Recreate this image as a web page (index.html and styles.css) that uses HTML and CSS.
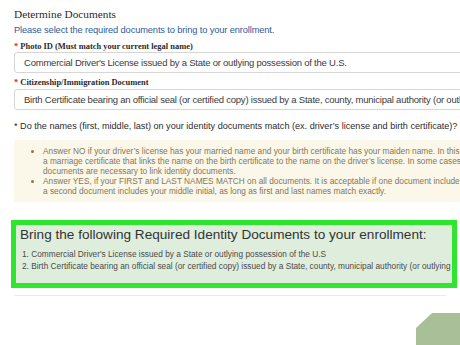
FILE: index.html
```html
<!DOCTYPE html>
<html lang="en">
<head>
    <meta charset="UTF-8">
    <title>Determine Documents</title>
    <link rel="stylesheet" href="styles.css">
</head>
<body>
    <div class="page">
        <h2 class="title">Determine Documents</h2>
        <p class="hint">Please select the required documents to bring to your enrollment.</p>

        <div class="field">
            <label class="field-label"><span class="req">*</span> Photo ID (Must match your current legal name)</label>
            <div class="select">Commercial Driver's License issued by a State or outlying possession of the U.S.</div>
        </div>

        <div class="field field-second">
            <label class="field-label"><span class="req">*</span> Citizenship/Immigration Document</label>
            <div class="select">Birth Certificate bearing an official seal (or certified copy) issued by a State, county, municipal authority (or outlying possession of the U.S.)</div>
        </div>

        <p class="question">* Do the names (first, middle, last) on your identity documents match (ex. driver’s license and birth certificate)? If not, why?</p>

        <div class="note">
            <ul>
                <li>Answer NO if your driver’s license has your married name and your birth certificate has your maiden name. In this case you must bring<br>a marriage certificate that links the name on the birth certificate to the name on the driver’s license. In some cases, multiple<br>documents are necessary to link identity documents.</li>
                <li>Answer YES, if your FIRST and LAST NAMES MATCH on all documents. It is acceptable if one document includes a full middle name and<br>a second document includes your middle initial, as long as first and last names match exactly.</li>
            </ul>
        </div>

        <div class="summary">
            <h3>Bring the following Required Identity Documents to your enrollment:</h3>
            <ol>
                <li>Commercial Driver's License issued by a State or outlying possession of the U.S</li>
                <li>Birth Certificate bearing an official seal (or certified copy) issued by a State, county, municipal authority (or outlying possession of the U.S.)</li>
            </ol>
        </div>
        <div class="rule"></div>
    </div>

    <svg class="corner" width="44" height="32" viewBox="0 0 44 32">
        <polygon points="16,0 44,0 44,32 0,32 0,15" fill="#a9bf97"/>
    </svg>
</body>
</html>
```

FILE: styles.css
```css
html, body {
    margin: 0;
    padding: 0;
    background: #fff;
    width: 460px;
    height: 345px;
    overflow: hidden;
}

body {
    position: relative;
    font-family: "Liberation Sans", Arial, sans-serif;
    color: #333;
}

.page {
    padding: 7px 0 0 14px;
    width: 600px;
    white-space: nowrap;
}

.title {
    font-family: "Liberation Serif", "Times New Roman", serif;
    font-weight: normal;
    font-size: 11.3px;
    line-height: 14px;
    margin: 0;
    color: #2b2b2b;
}

.hint {
    margin: 3px 0 0;
    font-size: 9.3px;
    letter-spacing: -0.13px;
    line-height: 12px;
    color: #2d5d9c;
}

.field {
    margin-top: 5px;
}

.field-second {
    margin-top: 4px;
}

.field-label {
    display: block;
    font-family: "Liberation Serif", "Times New Roman", serif;
    font-size: 8.45px;
    line-height: 11px;
    font-weight: bold;
    color: #2b2b2b;
}

.req {
    color: #d9281e;
}

.select {
    margin-top: 0;
    height: 19px;
    width: 500px;
    border: 1px solid #d6d6d6;
    border-radius: 3px;
    padding: 0 9px;
    font-size: 9.5px;
    letter-spacing: -0.22px;
    line-height: 19px;
    color: #3a3a3a;
    overflow: hidden;
}

.field-second .select {
    margin-top: 1px;
}

.question {
    margin: 10px 0 0;
    font-size: 9.1px;
    line-height: 13px;
    color: #2b2b2b;
}

.note {
    margin-top: 7px;
    width: 560px;
    background: #fbf8e9;
    padding: 6px 0;
    color: #85765a;
    font-size: 8.3px;
    line-height: 10px;
}

.note ul {
    margin: 0;
    padding-left: 29px;
}

.summary {
    box-sizing: border-box;
    margin: 18px 0 0 -3px;
    width: 446px;
    border: 5px solid #2fe62f;
    background: #dfeedc;
    padding: 1px 0 11px 4px;
    overflow: hidden;
}

.summary h3 {
    margin: 0;
    font-weight: normal;
    font-size: 13.6px;
    line-height: 17px;
    color: #333;
}

.summary ol {
    margin: 5px 0 0 2px;
    padding-left: 0;
    list-style-position: inside;
    font-size: 8.3px;
    line-height: 12px;
    color: #4a4a4a;
}

.rule {
    margin-top: 7px;
    width: 432px;
    height: 1px;
    background: #f0e8ec;
}

.corner {
    position: absolute;
    right: 0;
    bottom: 0;
}
```
